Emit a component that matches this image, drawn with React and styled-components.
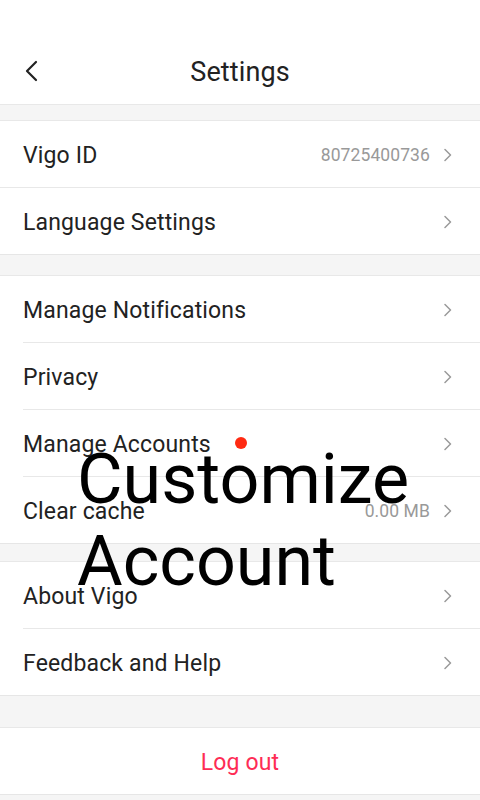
import React from "react";
import styled, { createGlobalStyle } from "styled-components";

const Global = createGlobalStyle`
  html, body { margin: 0; padding: 0; background: #f5f5f5; }
  body { font-family: Roboto, "Noto Sans", "Liberation Sans", sans-serif; }
  * { box-sizing: border-box; }
`;

const Page = styled.div`
  position: relative;
  width: 480px;
  min-height: 800px;
  background: #f5f5f5;
  display: flex;
  flex-direction: column;
`;

const Header = styled.header`
  height: 105px;
  padding-top: 40px;
  background: #fff;
  border-bottom: 1px solid #e8e8e8;
  display: grid;
  grid-template-columns: 64px 1fr 64px;
  align-items: center;
`;

const BackButton = styled.div`
  height: 64px;
  display: flex;
  align-items: center;
  padding-left: 24px;
  padding-bottom: 2px;
`;

const Title = styled.h1`
  margin: 0;
  text-align: center;
  font-size: 27px;
  font-weight: 400;
  color: #222;
  line-height: 64px;
  letter-spacing: 0.1px;
`;

const Section = styled.section`
  background: #fff;
  border-top: 1px solid #e8e8e8;
  border-bottom: 1px solid #e6e6e6;
  margin-top: ${(p) => p.$gap}px;
  display: flex;
  flex-direction: column;
`;

const Row = styled.div`
  position: relative;
  height: ${(p) => (p.$last ? 66 : 67)}px;
  padding-top: 2px;
  padding-bottom: ${(p) => (p.$last ? 0 : 1)}px;
  padding-left: 23px;
  padding-right: 28px;
  display: flex;
  align-items: center;
  ${(p) =>
    !p.$last &&
    `&::after {
      content: "";
      position: absolute;
      left: ${p.$fullLine ? 0 : 23}px;
      right: 0;
      bottom: 0;
      height: 1px;
      background: #e8e8e8;
    }`}
`;

const Label = styled.span`
  font-size: 23px;
  letter-spacing: 0.15px;
  color: #222;
`;

const Dot = styled.span`
  width: 12px;
  height: 12px;
  border-radius: 50%;
  background: #ff2a12;
  margin-left: 24px;
  margin-bottom: 2px;
`;

const Spacer = styled.span`
  flex: 1;
`;

const Value = styled.span`
  font-size: 17.5px;
  letter-spacing: 0.1px;
  color: #999;
  margin-right: 14px;
`;

const LogoutRow = styled.div`
  height: 66px;
  display: flex;
  align-items: center;
  justify-content: center;
  font-size: 23px;
  letter-spacing: 0.15px;
  color: #fe2c55;
  padding-top: 2px;
`;

const Overlay = styled.div`
  position: absolute;
  left: 77px;
  top: 438px;
  font-family: Roboto, sans-serif;
  font-size: 70px;
  line-height: 82px;
  color: #000;
  pointer-events: none;
`;

const Chevron = () => (
  <svg width="8" height="14" viewBox="0 0 8 14" fill="none">
    <path d="M1 1.5 L6.5 7 L1 12.5" stroke="#9a9a9a" strokeWidth="1.5" strokeLinecap="round" strokeLinejoin="round" />
  </svg>
);

const BackIcon = () => (
  <svg width="14" height="22" viewBox="0 0 14 22" fill="none">
    <path d="M12 2 L3 11 L12 20" stroke="#222" strokeWidth="2.2" strokeLinecap="round" strokeLinejoin="round" />
  </svg>
);

const Item = ({ label, value, dot, last, fullLine }) => (
  <Row $last={last} $fullLine={fullLine}>
    <Label>{label}</Label>
    {dot && <Dot />}
    <Spacer />
    {value && <Value>{value}</Value>}
    <Chevron />
  </Row>
);

export default function App() {
  return (
    <>
      <Global />
      <Page>
        <Header>
          <BackButton>
            <BackIcon />
          </BackButton>
          <Title>Settings</Title>
          <div />
        </Header>
        <Section $gap={15}>
          <Item label="Vigo ID" value="80725400736" fullLine />
          <Item label="Language Settings" last />
        </Section>
        <Section $gap={20}>
          <Item label="Manage Notifications" />
          <Item label="Privacy" />
          <Item label="Manage Accounts" dot />
          <Item label="Clear cache" value="0.00 MB" last />
        </Section>
        <Section $gap={17}>
          <Item label="About Vigo" />
          <Item label="Feedback and Help" last />
        </Section>
        <Section $gap={31}>
          <LogoutRow>Log out</LogoutRow>
        </Section>
        <Overlay>
          Customize
          <br />
          Account
        </Overlay>
      </Page>
    </>
  );
}
